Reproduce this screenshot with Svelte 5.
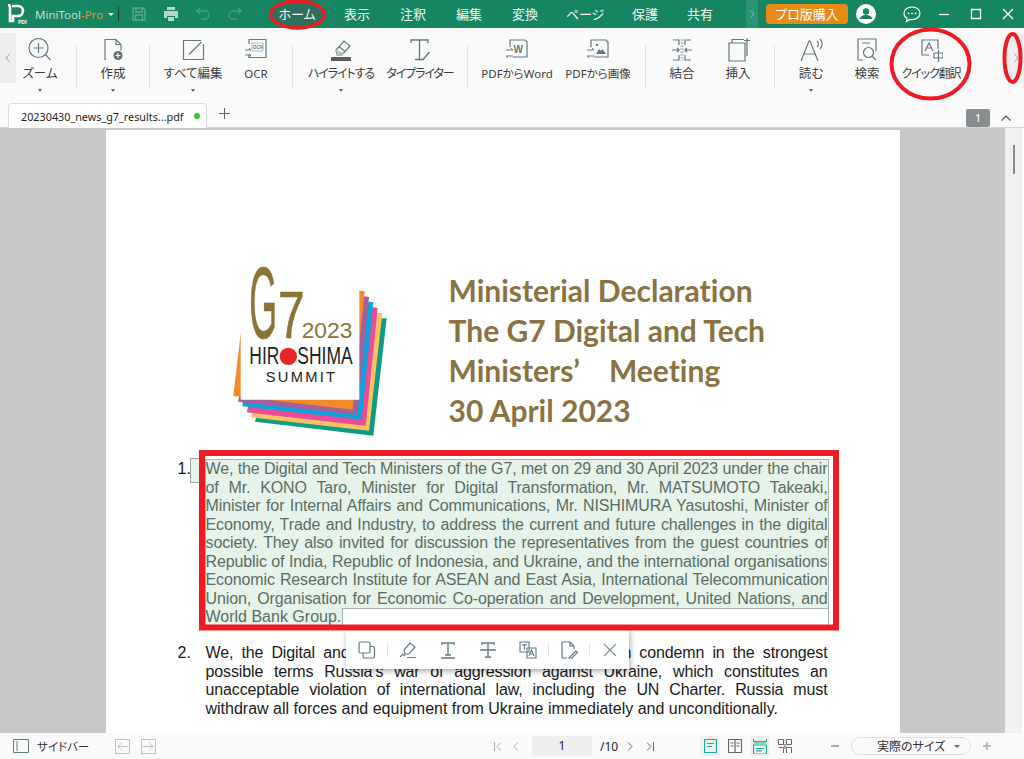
<script>
  const slate = '#5f7b80';

  const menu = [
    { label: 'ホーム', w: 64, active: true },
    { label: '表示', w: 56 },
    { label: '注釈', w: 56 },
    { label: '編集', w: 56 },
    { label: '変換', w: 56 },
    { label: 'ページ', w: 64 },
    { label: '保護', w: 56 },
    { label: '共有', w: 54 }
  ];

  const icons = {
    zoom: '<circle cx="10.500" cy="10" r="9.500"/><path d="M10.500 5v10M5.500 10h10M17.500 16.500l5 5.500"/>',
    create: '<path d="M5 21.500H4V1.500h11l5 5v6M15 1.500v5h5"/><circle cx="17" cy="17.500" r="4.500" fill="#5f6f72" stroke="none"/><path d="M14.500 17.500h5M17 15v5" stroke="#fff"/>',
    edit: '<path d="M20 2.500H2.500v19h20V6M20.500 4L8 16.500"/>',
    ocr: '<path d="M5 6V1.500h17v18H5v-3"/><path d="M8 5h11v8H8z" stroke="#9fb0b3" stroke-width=".8"/><text x="9" y="11" class="mini">OCR</text><path d="M1 12h6l-2-2M1 17h6l-2 2" stroke-width="1"/>',
    highlight: '<path d="M7 12l8-9 6 5-8 9H8zM10 8.500l6 5"/><path d="M7 12l1 5h5l2-2z" fill="#b9c4c6" stroke="none"/><path d="M2 19h20v4H2z" fill="#5c5c5c" stroke="none"/>',
    type: '<path d="M3 5V2h17v3M11.500 2v19M7 21.500h9M15.500 21l6-7" stroke-width="1.300"/>',
    word: '<path d="M5 9V2h15l2 2v15H8"/><text x="8.500" y="15" class="mid">W</text><path d="M1 12h7l-2-2M8 18H1l2 2" stroke-width="1"/>',
    image: '<path d="M5 9V2h15l2 2v15H8"/><path d="M10 16l3-5 2 2 1.500-2 3.500 5z" fill="#5f7b80" stroke="none"/><circle cx="11" cy="7" r="1.200" fill="#5f7b80" stroke="none"/><path d="M1 12h7l-2-2M8 18H1l2 2" stroke-width="1"/>',
    merge: '<path d="M3 2h6v5M3 22h6v-5M21 2h-6v5M21 22h-6v-5M2 12h7l-2-2M9 12l-2 2M22 12h-7l2-2M15 12l2 2"/><path d="M12 1v22" stroke-dasharray="2 1" stroke-width="3" stroke="#c3cacb"/>',
    insert: '<path d="M3 5h16v18H3zM6 5V1.500h12M21 4v14M18 2.500h6M21 0v5"/>',
    read: '<path d="M2 23L10 3h1l8 20M5 16h11M18 3a4 4 0 0 1 0 6M21 1a7 7 0 0 1 0 10"/>',
    search: '<path d="M8 22H3V1h18v12M7 5h8"/><circle cx="13.500" cy="14.500" r="5"/><path d="M17 18l4 4"/>',
    translate: '<path d="M10 17H3V2h16v9"/><path d="M6 13l4-8 4 8M7.500 10h5"/><path d="M15 15h9v5h-9zM19.500 12v12"/>'
  };

  // width of each slot is picked so the label centres line up with the ribbon
  const ribbon = [
    [
      { label: 'ズーム', icon: 'zoom', w: 72, caret: true },
    ],
    [
      { label: '作成', icon: 'create', w: 72, caret: true },
    ],
    [
      { label: 'すべて編集', icon: 'edit', w: 86, caret: true },
      { label: 'OCR', icon: 'ocr', w: 56, pad: 16, latin: true },
    ],
    [
      { label: 'ハイライトする', icon: 'highlight', w: 96, caret: true, tight: true },
      { label: 'タイプライター', icon: 'type', w: 78, pad: 16, tight: true },
    ],
    [
      { label: 'PDFからWord', icon: 'word', w: 98, latin: true },
      { label: 'PDFから画像', icon: 'image', w: 79, pad: 15, latin: true },
    ],
    [
      { label: '結合', icon: 'merge', w: 72 },
      { label: '挿入', icon: 'insert', w: 56, pad: 16 },
    ],
    [
      { label: '読む', icon: 'read', w: 72, caret: true },
      { label: '検索', icon: 'search', w: 40 },
      { label: 'クイック翻訳', icon: 'translate', w: 88, tight: true },
    ]
  ];

  const paraOne = [
    'We, the Digital and Tech Ministers of the G7, met on 29 and 30 April 2023 under the chair',
    'of Mr. KONO Taro, Minister for Digital Transformation, Mr. MATSUMOTO Takeaki,',
    'Minister for Internal Affairs and Communications, Mr. NISHIMURA Yasutoshi, Minister of',
    'Economy, Trade and Industry, to address the current and future challenges in the digital',
    'society. They also invited for discussion the representatives from the guest countries of',
    'Republic of India, Republic of Indonesia, and Ukraine, and the international organisations',
    'Economic Research Institute for ASEAN and East Asia, International Telecommunication',
    'Union, Organisation for Economic Co-operation and Development, United Nations, and'
  ];

  const paraTwo = [
    'We, the Digital and Tech Ministers of the G7 once again condemn in the strongest',
    'possible terms Russia\u2019s war of aggression against Ukraine, which constitutes an',
    'unacceptable violation of international law, including the UN Charter. Russia must'
  ];
</script>

<div class="app">
  <header class="titlebar">
    <svg class="brand" width="20" height="22" viewBox="0 0 20 22">
      <path d="M3 3v15h3v-5h5a5 5 0 0 0 0-10H5" fill="none" stroke="#fff" stroke-width="2.600"/>
      <path d="M6 6h4.500a2 2 0 0 1 0 4H6z" fill="#168562"/>
      <rect x="1" y="1" width="2.500" height="2.500" fill="#fff"/>
      <text x="11" y="21" class="pdf-tag">PDF</text>
    </svg>
    <span class="appname">MiniTool<span class="pro">-Pro</span></span>
    <span class="title-caret"></span>
    <span class="title-div"></span>
    <div class="quick">
      <svg width="16" height="16" viewBox="0 0 16 16" fill="none" stroke="#5aa78c" stroke-width="1.400"><path d="M2 2h10l2 2v10H2zM5 2v4h6V2M4.500 14V9h7v5"/></svg>
      <svg width="16" height="16" viewBox="0 0 16 16" fill="#b9d6cb"><path d="M4 1h8v3H4zM1 5h14v7h-3v-2H4v2H1zM5 11h6v4H5z"/></svg>
      <svg width="16" height="16" viewBox="0 0 16 16" fill="none" stroke="#4c9d82" stroke-width="1.400"><path d="M5 2L2 5l3 3M2 5h8a4 4 0 0 1 0 8H6"/></svg>
      <svg width="16" height="16" viewBox="0 0 16 16" fill="none" stroke="#4c9d82" stroke-width="1.400"><path d="M11 2l3 3-3 3M14 5H6a4 4 0 0 0 0 8h4"/></svg>
    </div>
    <nav class="menu">
      {#each menu as m}
        <span class="menu-item" class:active={m.active} style="width:{m.w}px">{m.label}</span>
      {/each}
    </nav>
    <span class="more"><svg width="5" height="8" viewBox="0 0 5 8" fill="none" stroke="#8fc4b0"><path d="M1 0.500l3 3.500-3 3.500"/></svg></span>
    <button class="buy">プロ版購入</button>
    <span class="avatar">
      <svg width="20" height="20" viewBox="0 0 20 20"><circle cx="10" cy="10" r="10" fill="#fff"/><circle cx="10" cy="7.500" r="3.200" fill="#168562"/><path d="M4 15c0-3 3-4 6-4s6 1 6 4z" fill="#168562"/></svg>
    </span>
    <div class="winbtns">
      <svg class="chat" width="18" height="18" viewBox="0 0 18 18" fill="none" stroke="#fff" stroke-width="1.200"><path d="M9 2c4.500 0 8 2.600 8 6.300s-3.500 6.300-8 6.300c-.8 0-1.500-.1-2.200-.2L3.500 16.500l.5-3.200C2 12.200 1 10.400 1 8.300 1 4.600 4.500 2 9 2z"/><circle cx="5.500" cy="8.300" r=".9" fill="#fff" stroke="none"/><circle cx="9" cy="8.300" r=".9" fill="#fff" stroke="none"/><circle cx="12.500" cy="8.300" r=".9" fill="#fff" stroke="none"/></svg>
      <svg width="12" height="12" viewBox="0 0 12 12" stroke="#fff" stroke-width="1.300"><path d="M1 6.500h10"/></svg>
      <svg width="12" height="12" viewBox="0 0 12 12" fill="none" stroke="#fff" stroke-width="1.300"><path d="M1.500 1.500h9v9h-9z"/></svg>
      <svg width="12" height="12" viewBox="0 0 12 12" stroke="#fff" stroke-width="1.300"><path d="M1 1l10 10M11 1L1 11"/></svg>
    </div>
  </header>

  <section class="ribbon">
    <span class="scroll-btn left"><svg width="6" height="10" viewBox="0 0 6 10" fill="none" stroke="#9a9a9a"><path d="M5 .500L1 5l4 4.500"/></svg></span>
    {#each ribbon as group, i}
      {#if i > 0}<span class="sep"></span>{/if}
      {#each group as tool}
        <div class="tool" style="width:{tool.w}px;padding-right:{tool.pad ?? 0}px">
          <svg class="tool-icon" width="24" height="24" viewBox="0 0 24 24" fill="none" stroke={slate} stroke-width="1.200">{@html icons[tool.icon]}</svg>
          <span class="tool-label" class:latin={tool.latin} class:tight={tool.tight}>{tool.label}</span>
          {#if tool.caret}<span class="caret"></span>{/if}
        </div>
      {/each}
    {/each}
    <span class="scroll-btn right"><svg width="6" height="10" viewBox="0 0 6 10" fill="none" stroke="#9a9a9a"><path d="M1 .500L5 5l-4 4.500"/></svg></span>
  </section>

  <section class="tabs">
    <div class="tab">
      <span>20230430_news_g7_results...pdf</span>
      <i class="dot"></i>
    </div>
    <svg class="add" width="11" height="11" viewBox="0 0 11 11" stroke="#666"><path d="M5.500 0v11M0 5.500h11"/></svg>
    <span class="page-badge">1</span>
    <svg class="collapse" width="10" height="6" viewBox="0 0 10 6" fill="none" stroke="#555" stroke-width="1.200"><path d="M.500 5.500L5 1l4.500 4.500"/></svg>
  </section>

  <main class="viewer">
    <div class="stage">
      <article class="page">
        <div class="masthead">
          <svg class="g7" width="220" height="200" viewBox="0 0 660 600">
            <polygon points="545,208 560,208 520,560 165,518 170,500" fill="#0f9c83"/>
            <polygon points="533,192 547,192 507,545 153,505 160,480" fill="#fcc162"/>
            <polygon points="520,175 533,177 497,530 140,490 145,470" fill="#ea4c97"/>
            <polygon points="507,158 520,160 485,512 127,472 130,450" fill="#0ea2d8"/>
            <polygon points="494,142 507,144 472,497 114,458 118,440" fill="#a45f9c"/>
            <polygon points="478,125 494,127 458,482 100,441 122,255" fill="#f58a28"/>
            <polygon points="122,125 478,125 478,452 122,452" fill="#fff"/>
            <text x="148" y="268" textLength="84" lengthAdjust="spacingAndGlyphs" class="g">G</text>
            <text x="234" y="268" textLength="80" lengthAdjust="spacingAndGlyphs" class="seven">7</text>
            <text x="305" y="268" textLength="152" lengthAdjust="spacingAndGlyphs" class="year">2023</text>
            <text x="148" y="345" textLength="90" lengthAdjust="spacingAndGlyphs" class="city">HIR</text>
            <circle cx="265" cy="322" r="26" fill="#e8262a"/>
            <text x="292" y="345" textLength="166" lengthAdjust="spacingAndGlyphs" class="city">SHIMA</text>
            <text x="197" y="400" textLength="208" class="summit">SUMMIT</text>
          </svg>
          <h1>Ministerial Declaration<br />The G7 Digital and Tech<br />Ministers’&nbsp;&nbsp;&nbsp; Meeting<br />30 April 2023</h1>
        </div>

        <div class="para selected">
          <span class="num"><span class="num-box"></span>1.</span>
          <div class="body">
            {#each paraOne as line}
              <div class="line">{line}</div>
            {/each}
            <div class="last-line"><span>World Bank Group.</span><i></i></div>
          </div>
        </div>

        <div class="para second">
          <span class="num">2.</span>
          <div class="body">
            {#each paraTwo as line}
              <div class="line">{line}</div>
            {/each}
            <div>withdraw all forces and equipment from Ukraine immediately and unconditionally.</div>
          </div>
        </div>
      </article>

      <div class="popup">
        <svg width="18" height="18" viewBox="0 0 18 18" fill="none" stroke="#5f7b80" stroke-width="1.200"><rect x="1" y="1" width="11" height="11" rx="1.500"/><path d="M5 12v3.500a1.500 1.500 0 0 0 1.500 1.500H15a1.500 1.500 0 0 0 1.500-1.500V7A1.500 1.500 0 0 0 15 5.500h-3"/></svg>
        <span class="pop-sep"></span>
        <div class="pop-group">
          <svg width="18" height="18" viewBox="0 0 18 18" fill="none" stroke="#5f7b80" stroke-width="1.200"><path d="M5 9l6-7 5 4-6 7H6zM1 16l3-3 2 2M8 16.500h9"/></svg>
          <svg width="18" height="18" viewBox="0 0 18 18" fill="none" stroke="#5f7b80" stroke-width="1.400"><path d="M3 4V2h12v2M9 2v12M6 14h6M2 17h14"/></svg>
          <svg width="18" height="18" viewBox="0 0 18 18" fill="none" stroke="#5f7b80" stroke-width="1.400"><path d="M3 4V2h12v2M9 2v14M6 16h6M1 9h16"/></svg>
          <svg width="18" height="18" viewBox="0 0 18 18" fill="none" stroke="#5f7b80" stroke-width="1.100"><path d="M1 1h9v10H1zM8 7h9v10H8z"/><path d="M3 4h5M5.500 3v6M10 15l2.500-6 2.500 6M11 13h3"/></svg>
        </div>
        <span class="pop-sep"></span>
        <svg width="18" height="18" viewBox="0 0 18 18" fill="none" stroke="#5f7b80" stroke-width="1.200"><path d="M7 17H2V1h8l4 4v3M10 1v4h4M9 17l7-7 1.500 1.500-7 7H9z"/></svg>
        <span class="pop-sep"></span>
        <svg width="18" height="18" viewBox="0 0 18 18" stroke="#7d9296" stroke-width="1.200"><path d="M3 3l12 12M15 3L3 15"/></svg>
      </div>
    </div>
    <div class="scrollbar"><span class="thumb"></span></div>
  </main>

  <footer class="status">
    <svg class="ico-side" width="16" height="14" viewBox="0 0 16 14" fill="none" stroke="#5f7b80"><path d="M.500.500h15v13H.500zM4 2v10"/></svg>
    <span class="side-label">サイドバー</span>
    <span class="nav-box"><svg width="11" height="9" viewBox="0 0 11 9" fill="none" stroke="#b5c5c5"><path d="M11 4.500H1M5 .500l-4 4 4 4"/></svg></span>
    <span class="nav-box"><svg width="11" height="9" viewBox="0 0 11 9" fill="none" stroke="#b5c5c5"><path d="M0 4.500h10M6 .500l4 4-4 4"/></svg></span>
    <div class="pager">
      <svg width="8" height="9" viewBox="0 0 8 9" fill="none" stroke="#aaa"><path d="M.500 0v9M7 .500l-4 4 4 4"/></svg>
      <svg class="prev" width="6" height="9" viewBox="0 0 6 9" fill="none" stroke="#aaa"><path d="M5 .500l-4 4 4 4"/></svg>
      <span class="page-input">1</span>
      <span class="page-total">/10</span>
      <svg class="next" width="6" height="9" viewBox="0 0 6 9" fill="none" stroke="#666"><path d="M1 .500l4 4-4 4"/></svg>
      <svg width="8" height="9" viewBox="0 0 8 9" fill="none" stroke="#666"><path d="M1 .500l4 4-4 4M7.500 0v9"/></svg>
    </div>
    <div class="views">
      <span class="view on"><svg width="13" height="14" viewBox="0 0 13 14" fill="none" stroke="#17b094" stroke-width="1.200"><path d="M.500.500h12v13H.500zM3 4.500h7M3 7.500h5"/></svg></span>
      <span class="view"><svg width="14" height="14" viewBox="0 0 14 14" fill="none" stroke="#666" stroke-width="1.200"><path d="M.500.500h13v13H.500zM7 .500v13M2.500 4h3M2.500 7h3M8.500 4h3M8.500 7h3"/></svg></span>
      <span class="view on"><svg width="14" height="15" viewBox="0 0 14 15" fill="none" stroke="#17b094" stroke-width="1.200"><path d="M.500 0v2.500h13V0M.500 15V6h13v9z"/><path d="M1 3h12v3H1z" fill="#7fd9c6" stroke="none"/><path d="M3 9.500h8M3 12h6"/></svg></span>
      <span class="view"><svg width="14" height="14" viewBox="0 0 14 14" fill="none" stroke="#666"><path d="M.500.500h5v5h-5zM8.500.500h5v5h-5zM.500 8.500h5V14M8.500 14V8.500h5V14"/><path d="M5.500 5h3v5h-3z" fill="#aaa" stroke="none"/></svg></span>
    </div>
    <svg class="zoom-minus" width="8" height="2" viewBox="0 0 8 2"><path d="M0 0h8v2H0z" fill="#aaa"/></svg>
    <div class="zoom-select"><span>実際のサイズ</span><i></i></div>
    <svg width="8" height="8" viewBox="0 0 8 8" stroke="#aaa" stroke-width="1.500"><path d="M4 0v8M0 4h8"/></svg>
  </footer>

  <!-- red marks someone drew over the screenshot -->
  <svg class="marks" width="1024" height="759" viewBox="0 0 1024 759" fill="none" stroke="#ed1c24">
    <ellipse cx="297.500" cy="14.500" rx="27" ry="13.500" stroke-width="3.500"/>
    <ellipse cx="930.500" cy="64" rx="39" ry="34.500" stroke-width="4"/>
    <ellipse cx="1012.500" cy="58" rx="8" ry="24" stroke-width="4"/>
    <rect x="202" y="453" width="634" height="174.500" stroke-width="6"/>
  </svg>
</div>

<style>
  :global(body) {
    margin: 0;
    overflow: hidden;
  }
  .app {
    position: relative;
    width: 1024px;
    height: 759px;
    display: flex;
    flex-direction: column;
    overflow: hidden;
    font-family: "Noto Sans", "Noto Sans CJK JP", sans-serif;
    font-size: 12px;
    font-feature-settings: "palt";
    color: #333;
    background: #fafafa;
  }
  .titlebar {
    flex: none;
    height: 28px;
    display: flex;
    align-items: center;
    background: #168562;
    color: #fff;
    padding: 0 10px 0 7px;
  }
  .brand {
    flex: none;
    width: 20px;
  }
  .pdf-tag {
    font: bold 5px "Liberation Sans", sans-serif;
    fill: #fff;
  }
  .appname {
    margin-left: 8px;
    width: 69px;
    font-size: 11.500px;
    color: #c4dfd5;
    white-space: nowrap;
  }
  .pro {
    color: #d59a2a;
  }
  .title-caret {
    width: 0;
    height: 0;
    margin-left: 4px;
    border: 3px solid transparent;
    border-top: 3px solid #e6f0ec;
    border-bottom: 0;
  }
  .title-div {
    width: 1px;
    height: 14px;
    margin-left: 4px;
    background: #1e3f33;
  }
  .quick {
    display: flex;
    gap: 16px;
    margin-left: 12px;
    margin-right: 21px;
  }
  .menu {
    display: flex;
    margin-left: 1px;
  }
  .menu-item {
    height: 28px;
    line-height: 28px;
    text-align: center;
    font-size: 13px;
    color: #f2f8f6;
  }
  .menu-item.active {
    background: radial-gradient(ellipse 27px 14px at center, #2f6f5c 100%, transparent 100%);
  }
  .more {
    width: 12px;
    height: 28px;
    margin-left: auto;
    display: flex;
    align-items: center;
    justify-content: center;
    background: #2a9474;
  }
  .buy {
    width: 82px;
    height: 20px;
    margin-left: 8px;
    padding: 0;
    border: 0;
    border-radius: 4px;
    background: #e98a17;
    color: #fff;
    font: inherit;
    font-size: 13px;
    line-height: 20px;
  }
  .avatar {
    display: flex;
    margin-left: 8px;
  }
  .winbtns {
    display: flex;
    align-items: center;
    margin-left: 27px;
    gap: 20px;
  }
  .chat {
    margin-right: -3px;
  }
  .ribbon {
    position: relative;
    flex: none;
    height: 72px;
    display: flex;
    padding-left: 4px;
    box-sizing: border-box;
  }
  .scroll-btn {
    position: absolute;
    top: 5px;
    width: 16px;
    height: 50px;
    display: flex;
    align-items: center;
    justify-content: center;
    background: #eee;
    border-radius: 2px;
  }
  .scroll-btn.left {
    left: 0;
  }
  .scroll-btn.right {
    right: 0;
  }
  .sep {
    flex: none;
    width: 1px;
    height: 44px;
    margin-top: 17px;
    background: #e2e2e2;
  }
  .tool {
    position: relative;
    flex: none;
    box-sizing: border-box;
    display: flex;
    flex-direction: column;
    align-items: center;
    padding-top: 10px;
  }
  .tool-icon {
    flex: none;
  }
  .tool-label {
    margin-top: 3px;
    line-height: 18px;
    white-space: nowrap;
    font-size: 12.500px;
    color: #3d3d3d;
  }
  .tool-label.latin {
    font-size: 11.500px;
  }
  .tool-label.tight {
    font-size: 12px;
    letter-spacing: -1.100px;
  }
  .caret {
    width: 0;
    height: 0;
    margin-top: 6px;
    border: 2.500px solid transparent;
    border-top: 3px solid #666;
    border-bottom: 0;
  }
  :global(.mini) {
    font: bold 4.500px "Liberation Sans", sans-serif;
    fill: #5f7b80;
    stroke: none;
  }
  :global(.mid) {
    font: bold 10px "Liberation Sans", sans-serif;
    fill: #5f7b80;
    stroke: none;
  }
  .tabs {
    flex: none;
    position: relative;
    height: 28px;
    display: flex;
    align-items: flex-end;
    padding-left: 8px;
    box-sizing: border-box;
    border-bottom: 1px solid #d6d6d6;
  }
  .tab {
    width: 199px;
    height: 25px;
    box-sizing: border-box;
    margin-bottom: -1px;
    display: flex;
    align-items: center;
    justify-content: space-between;
    padding: 0 6px 0 12px;
    background: #fff;
    border: 1px solid #dcdcdc;
    border-bottom: 0;
    border-radius: 4px 4px 0 0;
    font-size: 10.800px;
    color: #222;
  }
  .dot {
    width: 6px;
    height: 6px;
    border-radius: 50%;
    background: #35c934;
  }
  .add {
    margin: 0 0 8px 12px;
  }
  .page-badge {
    margin-left: auto;
    width: 24px;
    height: 18px;
    line-height: 18px;
    text-align: center;
    border-radius: 2px;
    background: #8a8d90;
    color: #fff;
    font-size: 11.500px;
  }
  .collapse {
    margin: 0 13px 6px 11px;
  }
  .viewer {
    flex: 1;
    min-height: 0;
    display: flex;
  }
  .stage {
    position: relative;
    flex: 1;
    background: #c8c8c8;
    padding-top: 2px;
    overflow: hidden;
  }
  .page {
    width: 794px;
    height: 640px;
    margin: 0 auto;
    padding: 119px 72px 0;
    box-sizing: border-box;
    background: #fff;
    font-family: "Liberation Sans", Arial, sans-serif;
    font-feature-settings: normal;
    font-size: 16px;
    line-height: 18.500px;
    color: #1a1a1a;
  }
  .masthead {
    display: flex;
    height: 211px;
    margin-left: 22px;
  }
  .g7 {
    flex: none;
  }
  .g7 text {
    font-family: "Liberation Sans", Arial, sans-serif;
  }
  .g, .seven {
    fill: #8c7435;
    stroke: #8c7435;
  }
  .g {
    font-size: 306px;
    stroke-width: 2;
  }
  .seven {
    font-size: 198px;
    stroke-width: 2;
  }
  .year {
    font-size: 64px;
    fill: #8c7435;
  }
  .city {
    font-size: 70px;
    fill: #222;
  }
  .summit {
    font-size: 44px;
    fill: #222;
  }
  h1 {
    margin: 21px 0 0 29px;
    font-family: Lato, "Open Sans", sans-serif;
    font-size: 30px;
    font-weight: 700;
    font-variant-ligatures: none;
    line-height: 40px;
    color: #8a7340;
    white-space: nowrap;
  }
  .para {
    display: flex;
  }
  .num {
    position: relative;
    width: 28px;
    flex: none;
  }
  .num-box {
    position: absolute;
    left: 12px;
    top: -2px;
    width: 14px;
    height: 25px;
    background: #e5f3ea;
    border: 1px solid #9aa89f;
    box-sizing: border-box;
  }
  .body {
    width: 622px;
  }
  .line {
    letter-spacing: -0.120px;
    text-align: justify;
    text-align-last: justify;
  }
  .selected .body {
    background: #e5f3ea;
    color: #5b6e63;
    outline: 1px solid #a4b3a9;
  }
  .last-line {
    display: flex;
  }
  .last-line i {
    flex: 1;
    margin-left: 1px;
    background: #fff;
    border: 1px solid #a4b3a9;
    border-width: 1px 0 0 1px;
  }
  .second {
    margin-top: 17.500px;
  }
  .popup {
    position: absolute;
    left: 346px;
    top: 502px;
    width: 283px;
    height: 39px;
    box-sizing: border-box;
    padding-left: 12px;
    display: flex;
    align-items: center;
    gap: 11px;
    background: #fff;
    box-shadow: 1px 2px 6px rgba(0, 0, 0, 0.35);
  }
  .pop-group {
    display: flex;
    gap: 22px;
  }
  .pop-sep {
    width: 1px;
    height: 14px;
    background: #e2e2e2;
  }
  .scrollbar {
    width: 19px;
    flex: none;
    background: linear-gradient(to right, #f0f0f0 17px, #fff 17px);
    padding-top: 17px;
    box-sizing: border-box;
  }
  .thumb {
    display: block;
    width: 2px;
    height: 29px;
    margin-left: 8px;
    background: #8a8a8a;
  }
  .status {
    flex: none;
    height: 26px;
    display: flex;
    align-items: center;
    background: #fafafa;
    padding-left: 13px;
  }
  .side-label {
    margin: 0 28px 0 8px;
    width: 50px;
    font-size: 11.500px;
    color: #333;
    white-space: nowrap;
  }
  .nav-box {
    width: 15px;
    height: 15px;
    box-sizing: border-box;
    margin-right: 11px;
    border: 1px solid #b5c5c5;
    display: flex;
    align-items: center;
    justify-content: center;
  }
  .pager {
    display: flex;
    align-items: center;
    margin-left: 327px;
  }
  .prev {
    margin-left: 11px;
  }
  .page-input {
    width: 60px;
    height: 20px;
    margin-left: 13px;
    line-height: 20px;
    text-align: center;
    background: #eee;
    color: #2a1a3a;
  }
  .page-total {
    width: 32px;
    margin-left: 8px;
    color: #223;
  }
  .next {
    margin-left: -5px;
    margin-right: 13px;
  }
  .views {
    display: flex;
    align-items: center;
    margin-left: 46px;
    gap: 5px;
  }
  .view {
    width: 20px;
    height: 20px;
    display: flex;
    align-items: center;
    justify-content: center;
    border-radius: 3px;
  }
  .view.on {
    background: #efefef;
  }
  .zoom-minus {
    margin-left: 36px;
  }
  .zoom-select {
    width: 120px;
    height: 18px;
    box-sizing: border-box;
    margin: 0 12px;
    display: flex;
    align-items: center;
    padding-left: 25px;
    border: 1px solid #ddd;
    border-radius: 9px;
    font-size: 12px;
    white-space: nowrap;
  }
  .zoom-select i {
    width: 0;
    height: 0;
    margin-left: 9px;
    border: 3px solid transparent;
    border-top: 3px solid #666;
    border-bottom: 0;
  }
  .marks {
    position: absolute;
    left: 0;
    top: 0;
    pointer-events: none;
  }
</style>
